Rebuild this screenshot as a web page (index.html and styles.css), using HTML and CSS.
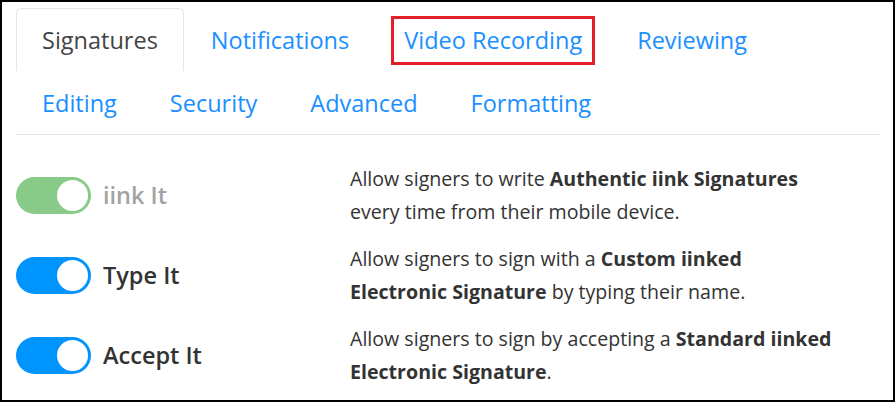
FILE: index.html
```html
<!DOCTYPE html>
<html>

<head>
    <meta charset="UTF-8">
    <title>Settings</title>
    <link rel="stylesheet" href="styles.css">
</head>

<body>
    <div class="frame">
        <ul class="tabs">
            <li class="tab active">Signatures</li>
            <li class="tab">Notifications</li>
            <li class="tab"><span class="marked">Video Recording</span></li>
            <li class="tab">Reviewing</li>
            <li class="tab">Editing</li>
            <li class="tab">Security</li>
            <li class="tab">Advanced</li>
            <li class="tab">Formatting</li>
        </ul>
        <div class="options">
            <div class="option">
                <div class="switch-cell">
                    <span class="switch green"><span class="knob"></span></span>
                    <span class="switch-label muted">iink It</span>
                </div>
                <p class="desc">Allow signers to write <b>Authentic iink Signatures</b> every time from their mobile device.</p>
            </div>
            <div class="option">
                <div class="switch-cell">
                    <span class="switch"><span class="knob"></span></span>
                    <span class="switch-label">Type It</span>
                </div>
                <p class="desc">Allow signers to sign with a <b>Custom iinked Electronic Signature</b> by typing their name.</p>
            </div>
            <div class="option">
                <div class="switch-cell">
                    <span class="switch"><span class="knob"></span></span>
                    <span class="switch-label">Accept It</span>
                </div>
                <p class="desc">Allow signers to sign by accepting a <b>Standard iinked Electronic Signature</b>.</p>
            </div>
        </div>
    </div>
</body>

</html>
```

FILE: styles.css
```css
* {
    box-sizing: border-box;
}

body {
    margin: 0;
    background-color: #fff;
    font-family: "Open Sans", sans-serif;
    color: #333;
}

.frame {
    height: 402px;
    border: 2px solid #000;
    padding: 6px 13px 0 14px;
    overflow: hidden;
}

.tabs {
    list-style: none;
    margin: 0;
    padding: 0;
    display: flex;
    flex-wrap: wrap;
    border-bottom: 1px solid #e6e6e6;
}

.tab {
    height: 63px;
    padding: 0 25px;
    display: flex;
    align-items: center;
    font-size: 23.5px;
    color: #1a8fff;
    border: 1px solid transparent;
    border-bottom: none;
    margin-right: 1px;
}

.tab.active {
    color: #444;
    border-color: #e6e6e6;
    border-radius: 6px 6px 0 0;
}

.marked {
    display: inline-block;
    line-height: 27px;
    padding: 0 2px;
    outline: 3px solid #e3202a;
    outline-offset: 8px;
}

.options {
    padding-top: 27px;
}

.option {
    display: flex;
    align-items: center;
    margin-bottom: 14px;
}

.switch-cell {
    flex-shrink: 0;
    width: 334px;
    display: flex;
    align-items: center;
    gap: 12px;
}

.switch {
    width: 75px;
    height: 37px;
    border-radius: 19px;
    background-color: #0094ff;
    display: flex;
    justify-content: flex-end;
    align-items: center;
    padding: 0 3px;
}

.switch.green {
    background-color: #88cb88;
}

.knob {
    width: 31px;
    height: 31px;
    border-radius: 50%;
    background-color: #fff;
}

.switch-label {
    font-size: 23.5px;
    font-weight: 600;
    color: #333;
}

.switch-label.muted {
    color: #a3a3a3;
}

.desc {
    margin: 0;
    width: 484px;
    font-size: 19.6px;
    line-height: 33px;
}

.desc b {
    font-weight: 700;
}
```
